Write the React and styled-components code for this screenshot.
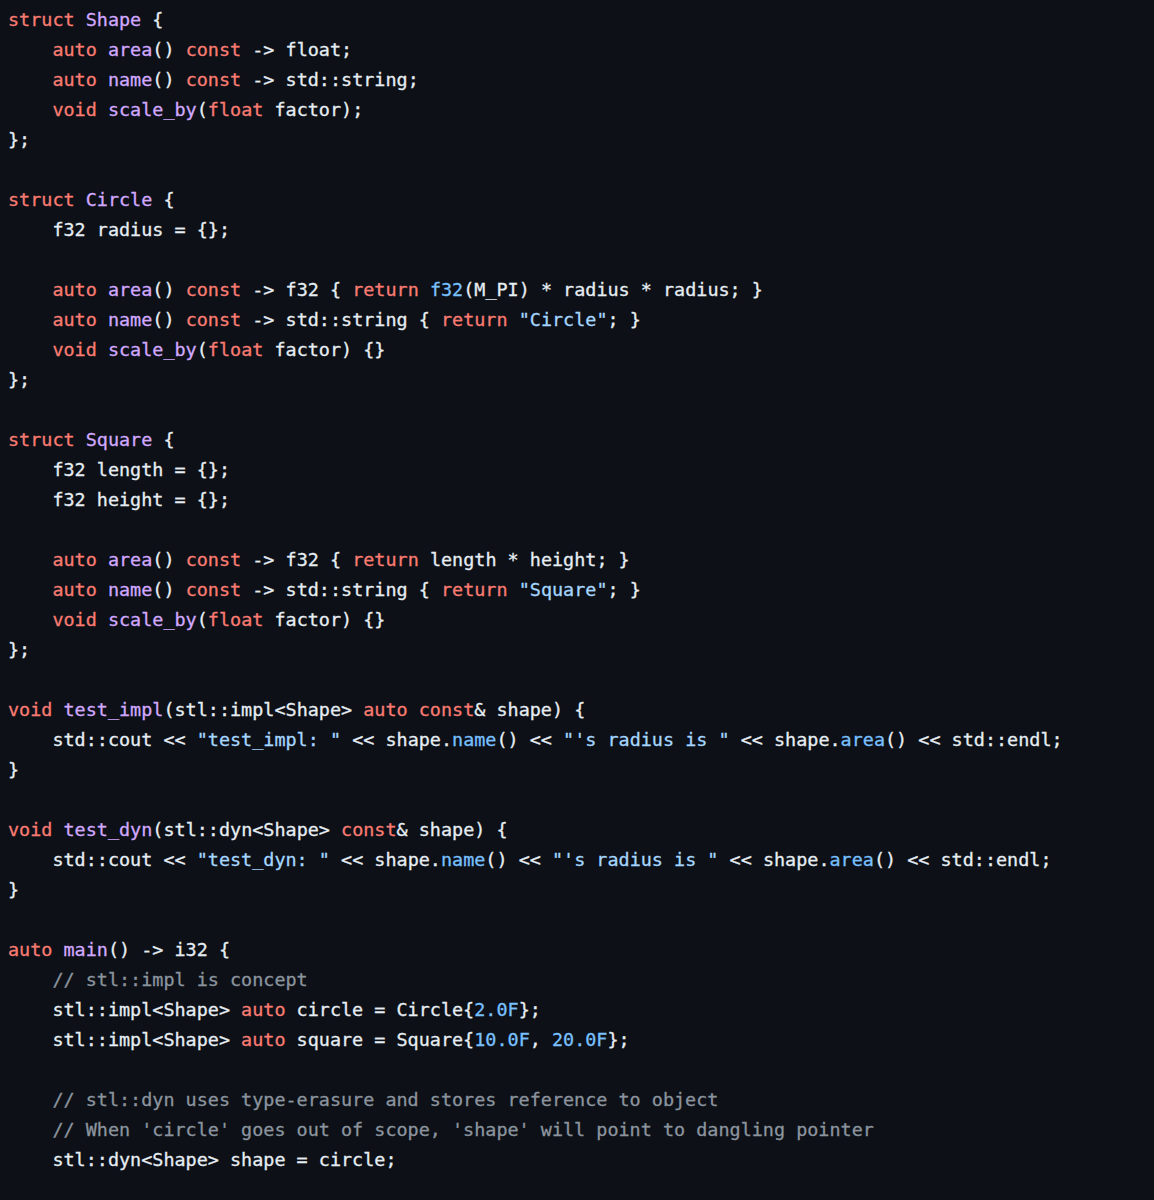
import React from 'react';
import styled, { createGlobalStyle } from 'styled-components';

const GlobalStyle = createGlobalStyle`
  html, body {
    margin: 0;
    padding: 0;
    background: #0d1117;
  }
`;

const Page = styled.div`
  min-height: 1200px;
  background: #0d1117;
  padding: 5px 8px;
  box-sizing: border-box;
`;

const Code = styled.pre`
  margin: 0;
  font-family: "DejaVu Sans Mono", "Liberation Mono", monospace;
  font-size: 18.45px;
  line-height: 30px;
  color: #e6edf3;
  white-space: pre;
  -webkit-text-stroke: 0.3px currentColor;
`;

const Line = styled.div`
  height: 30px;
`;

const colors = {
  k: '#f97b72',
  e: '#d2a8ff',
  c: '#79c0ff',
  s: '#a5d6ff',
  m: '#8b949e',
};

const Token = styled.span`
  color: ${(p) => colors[p.$kind] || '#e6edf3'};
`;

const source = [
  '[k]struct[/] [e]Shape[/] {',
  '    [k]auto[/] [e]area[/]() [k]const[/] -> float;',
  '    [k]auto[/] [e]name[/]() [k]const[/] -> std::string;',
  '    [k]void[/] [e]scale_by[/]([k]float[/] factor);',
  '};',
  '',
  '[k]struct[/] [e]Circle[/] {',
  '    f32 radius = {};',
  '',
  '    [k]auto[/] [e]area[/]() [k]const[/] -> f32 { [k]return[/] [c]f32[/](M_PI) * radius * radius; }',
  '    [k]auto[/] [e]name[/]() [k]const[/] -> std::string { [k]return[/] [s]"Circle"[/]; }',
  '    [k]void[/] [e]scale_by[/]([k]float[/] factor) {}',
  '};',
  '',
  '[k]struct[/] [e]Square[/] {',
  '    f32 length = {};',
  '    f32 height = {};',
  '',
  '    [k]auto[/] [e]area[/]() [k]const[/] -> f32 { [k]return[/] length * height; }',
  '    [k]auto[/] [e]name[/]() [k]const[/] -> std::string { [k]return[/] [s]"Square"[/]; }',
  '    [k]void[/] [e]scale_by[/]([k]float[/] factor) {}',
  '};',
  '',
  '[k]void[/] [e]test_impl[/](stl::impl<Shape> [k]auto[/] [k]const[/]& shape) {',
  '    std::cout << [s]"test_impl: "[/] << shape.[c]name[/]() << [s]"\'s radius is "[/] << shape.[c]area[/]() << std::endl;',
  '}',
  '',
  '[k]void[/] [e]test_dyn[/](stl::dyn<Shape> [k]const[/]& shape) {',
  '    std::cout << [s]"test_dyn: "[/] << shape.[c]name[/]() << [s]"\'s radius is "[/] << shape.[c]area[/]() << std::endl;',
  '}',
  '',
  '[k]auto[/] [e]main[/]() -> i32 {',
  '    [m]// stl::impl is concept[/]',
  '    stl::impl<Shape> [k]auto[/] circle = Circle{[c]2.0F[/]};',
  '    stl::impl<Shape> [k]auto[/] square = Square{[c]10.0F[/], [c]20.0F[/]};',
  '',
  '    [m]// stl::dyn uses type-erasure and stores reference to object[/]',
  "    [m]// When 'circle' goes out of scope, 'shape' will point to dangling pointer[/]",
  '    stl::dyn<Shape> shape = circle;',
];

// splits "[k]auto[/] x" into [['k','auto'], [null,' x']]
function tokenize(line) {
  const out = [];
  const re = /\[(\w)\](.*?)\[\/\]/g;
  let last = 0;
  let m;
  while ((m = re.exec(line))) {
    if (m.index > last) out.push([null, line.slice(last, m.index)]);
    out.push([m[1], m[2]]);
    last = re.lastIndex;
  }
  if (last < line.length) out.push([null, line.slice(last)]);
  return out;
}

export default function App() {
  return (
    <Page>
      <GlobalStyle />
      <Code>
        {source.map((line, i) => (
          <Line key={i}>
            {tokenize(line).map(([kind, text], j) => (
              <Token key={j} $kind={kind}>
                {text}
              </Token>
            ))}
          </Line>
        ))}
      </Code>
    </Page>
  );
}
